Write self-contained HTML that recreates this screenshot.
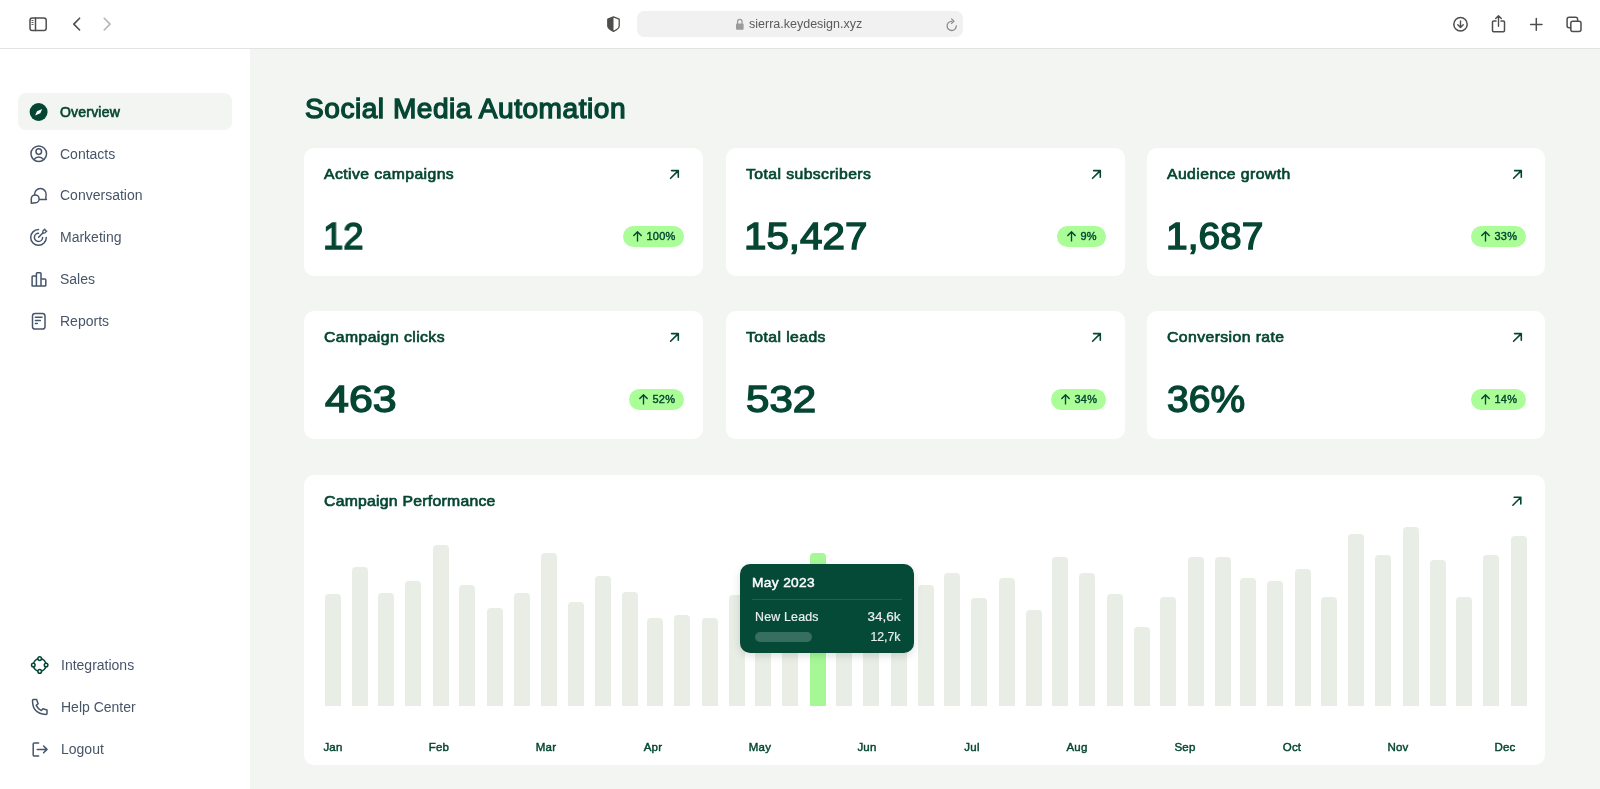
<!DOCTYPE html>
<html><head><meta charset="utf-8"><title>Social Media Automation</title><style>
*{margin:0;padding:0;box-sizing:border-box}
html,body{width:1600px;height:789px;overflow:hidden;background:#f3f5f2;font-family:"Liberation Sans",sans-serif}
.t{position:absolute;line-height:1;white-space:nowrap;will-change:transform}
.abs{position:absolute}
#bar{position:absolute;left:0;top:0;width:1600px;height:49px;background:#fff;border-bottom:1px solid #e3e3e3}
#side{position:absolute;left:0;top:49px;width:250px;height:740px;background:#fff}
.card{position:absolute;background:#fff;border-radius:10px}
.badge{position:absolute;height:21px;border-radius:11px;background:#aafd97;display:flex;align-items:center;padding:0 9px 0 9.5px;color:#054633;font-size:11px;font-weight:400;-webkit-text-stroke:0.4px #054633;letter-spacing:0.2px;line-height:1;will-change:transform}
.badge svg{margin-right:5px;flex:none}
.b{position:absolute;background:#e8ede6;border-radius:4px 4px 0 0;width:16px}
</style></head>
<body>
<div id="bar"></div>
<div id="side"></div>
<div class="abs" style="left:637px;top:11px;width:326px;height:26px;border-radius:7px;background:#f1f1f1"></div>
<div class="t" style="left:749px;top:18.42px;font-size:12.5px;font-weight:400;color:#5b5b5b;">sierra.keydesign.xyz</div>
<div class="abs" style="left:18px;top:93px;width:214px;height:37px;border-radius:8px;background:#f3f5f2"></div>
<div class="t" style="left:60px;top:104.55px;font-size:14px;font-weight:400;color:#054633;letter-spacing:0.2px;-webkit-text-stroke:0.63px #054633;">Overview</div>
<div class="t" style="left:60px;top:146.65px;font-size:14px;font-weight:400;color:#475569;">Contacts</div>
<div class="t" style="left:60px;top:188.45px;font-size:14px;font-weight:400;color:#475569;">Conversation</div>
<div class="t" style="left:60px;top:230.25px;font-size:14px;font-weight:400;color:#475569;">Marketing</div>
<div class="t" style="left:60px;top:272.05px;font-size:14px;font-weight:400;color:#475569;">Sales</div>
<div class="t" style="left:60px;top:313.85px;font-size:14px;font-weight:400;color:#475569;">Reports</div>
<div class="t" style="left:61px;top:658.45px;font-size:14px;font-weight:400;color:#475569;">Integrations</div>
<div class="t" style="left:61px;top:700.35px;font-size:14px;font-weight:400;color:#475569;">Help Center</div>
<div class="t" style="left:61px;top:742.45px;font-size:14px;font-weight:400;color:#475569;">Logout</div>
<div class="t" style="left:305px;top:95.64px;font-size:27px;font-weight:400;color:#054633;-webkit-text-stroke:1.3px #054633;letter-spacing:0.5px;transform:scaleX(1.04);transform-origin:0 0;">Social Media Automation</div>
<div class="card" style="left:304px;top:148px;width:399px;height:128px"></div>
<div class="t" style="left:324px;top:166.30px;font-size:15px;font-weight:400;color:#054633;letter-spacing:0.4px;transform:scaleX(1.05);transform-origin:0 0;-webkit-text-stroke:0.67px #054633;">Active campaigns</div>
<div class="t" style="left:323px;top:218.26px;font-size:37.5px;font-weight:400;color:#054633;transform:scaleX(0.974);transform-origin:0 0;-webkit-text-stroke:1.4px #054633;">12</div>
<div class="badge" style="right:916px;top:226px"><svg width="9" height="11" viewBox="0 0 9 11"><path d="M4.5 10.6V1M0.4 4.9L4.5 0.8L8.6 4.9" fill="none" stroke="#054633" stroke-width="1.35"/></svg>100%</div>
<div class="card" style="left:726px;top:148px;width:399px;height:128px"></div>
<div class="t" style="left:746px;top:166.30px;font-size:15px;font-weight:400;color:#054633;letter-spacing:0.4px;transform:scaleX(1.05);transform-origin:0 0;-webkit-text-stroke:0.67px #054633;">Total subscribers</div>
<div class="t" style="left:744.3px;top:218.26px;font-size:37.5px;font-weight:400;color:#054633;transform:scaleX(1.075);transform-origin:0 0;-webkit-text-stroke:1.4px #054633;">15,427</div>
<div class="badge" style="right:494px;top:226px"><svg width="9" height="11" viewBox="0 0 9 11"><path d="M4.5 10.6V1M0.4 4.9L4.5 0.8L8.6 4.9" fill="none" stroke="#054633" stroke-width="1.35"/></svg>9%</div>
<div class="card" style="left:1147px;top:148px;width:398px;height:128px"></div>
<div class="t" style="left:1167px;top:166.30px;font-size:15px;font-weight:400;color:#054633;letter-spacing:0.4px;transform:scaleX(1.05);transform-origin:0 0;-webkit-text-stroke:0.67px #054633;">Audience growth</div>
<div class="t" style="left:1166.2px;top:218.26px;font-size:37.5px;font-weight:400;color:#054633;transform:scaleX(1.038);transform-origin:0 0;-webkit-text-stroke:1.4px #054633;">1,687</div>
<div class="badge" style="right:74px;top:226px"><svg width="9" height="11" viewBox="0 0 9 11"><path d="M4.5 10.6V1M0.4 4.9L4.5 0.8L8.6 4.9" fill="none" stroke="#054633" stroke-width="1.35"/></svg>33%</div>
<div class="card" style="left:304px;top:311px;width:399px;height:128px"></div>
<div class="t" style="left:324px;top:329.30px;font-size:15px;font-weight:400;color:#054633;letter-spacing:0.4px;transform:scaleX(1.05);transform-origin:0 0;-webkit-text-stroke:0.67px #054633;">Campaign clicks</div>
<div class="t" style="left:325px;top:381.26px;font-size:37.5px;font-weight:400;color:#054633;transform:scaleX(1.145);transform-origin:0 0;-webkit-text-stroke:1.4px #054633;">463</div>
<div class="badge" style="right:916px;top:389px"><svg width="9" height="11" viewBox="0 0 9 11"><path d="M4.5 10.6V1M0.4 4.9L4.5 0.8L8.6 4.9" fill="none" stroke="#054633" stroke-width="1.35"/></svg>52%</div>
<div class="card" style="left:726px;top:311px;width:399px;height:128px"></div>
<div class="t" style="left:746px;top:329.30px;font-size:15px;font-weight:400;color:#054633;letter-spacing:0.4px;transform:scaleX(1.05);transform-origin:0 0;-webkit-text-stroke:0.67px #054633;">Total leads</div>
<div class="t" style="left:746px;top:381.26px;font-size:37.5px;font-weight:400;color:#054633;transform:scaleX(1.121);transform-origin:0 0;-webkit-text-stroke:1.4px #054633;">532</div>
<div class="badge" style="right:494px;top:389px"><svg width="9" height="11" viewBox="0 0 9 11"><path d="M4.5 10.6V1M0.4 4.9L4.5 0.8L8.6 4.9" fill="none" stroke="#054633" stroke-width="1.35"/></svg>34%</div>
<div class="card" style="left:1147px;top:311px;width:398px;height:128px"></div>
<div class="t" style="left:1167px;top:329.30px;font-size:15px;font-weight:400;color:#054633;letter-spacing:0.4px;transform:scaleX(1.05);transform-origin:0 0;-webkit-text-stroke:0.67px #054633;">Conversion rate</div>
<div class="t" style="left:1166.9px;top:381.26px;font-size:37.5px;font-weight:400;color:#054633;transform:scaleX(1.04);transform-origin:0 0;-webkit-text-stroke:1.4px #054633;">36%</div>
<div class="badge" style="right:74px;top:389px"><svg width="9" height="11" viewBox="0 0 9 11"><path d="M4.5 10.6V1M0.4 4.9L4.5 0.8L8.6 4.9" fill="none" stroke="#054633" stroke-width="1.35"/></svg>14%</div>
<div class="card" style="left:304px;top:475px;width:1241px;height:290px"></div>
<div class="t" style="left:324px;top:493.10px;font-size:15px;font-weight:400;color:#054633;letter-spacing:0.25px;transform:scaleX(1.05);transform-origin:0 0;-webkit-text-stroke:0.67px #054633;">Campaign Performance</div>
<div class="b" style="left:325.00px;top:593.5px;height:112.5px"></div>
<div class="b" style="left:352.00px;top:566.9px;height:139.1px"></div>
<div class="b" style="left:378.00px;top:592.7px;height:113.3px"></div>
<div class="b" style="left:405.00px;top:581.3px;height:124.7px"></div>
<div class="b" style="left:433.00px;top:544.6px;height:161.4px"></div>
<div class="b" style="left:459.00px;top:584.9px;height:121.1px"></div>
<div class="b" style="left:487.00px;top:607.9px;height:98.1px"></div>
<div class="b" style="left:514.00px;top:592.7px;height:113.3px"></div>
<div class="b" style="left:541.00px;top:553.4px;height:152.6px"></div>
<div class="b" style="left:568.00px;top:602.3px;height:103.7px"></div>
<div class="b" style="left:595.00px;top:575.7px;height:130.3px"></div>
<div class="b" style="left:622.00px;top:591.7px;height:114.3px"></div>
<div class="b" style="left:647.00px;top:618.0px;height:88.0px"></div>
<div class="b" style="left:674.00px;top:615.0px;height:91.0px"></div>
<div class="b" style="left:702.00px;top:618.0px;height:88.0px"></div>
<div class="b" style="left:729.00px;top:594.7px;height:111.3px"></div>
<div class="b" style="left:755.00px;top:590.0px;height:116.0px"></div>
<div class="b" style="left:782.00px;top:590.0px;height:116.0px"></div>
<div class="b" style="left:810.00px;top:553.4px;height:152.6px;background:#a6f897"></div>
<div class="b" style="left:836.00px;top:590.0px;height:116.0px"></div>
<div class="b" style="left:863.00px;top:590.0px;height:116.0px"></div>
<div class="b" style="left:891.00px;top:590.0px;height:116.0px"></div>
<div class="b" style="left:918.00px;top:585.0px;height:121.0px"></div>
<div class="b" style="left:944.00px;top:572.6px;height:133.4px"></div>
<div class="b" style="left:971.00px;top:598.2px;height:107.8px"></div>
<div class="b" style="left:999.00px;top:578.4px;height:127.6px"></div>
<div class="b" style="left:1026.00px;top:610.3px;height:95.7px"></div>
<div class="b" style="left:1052.00px;top:556.9px;height:149.1px"></div>
<div class="b" style="left:1079.00px;top:572.6px;height:133.4px"></div>
<div class="b" style="left:1107.00px;top:593.6px;height:112.4px"></div>
<div class="b" style="left:1134.00px;top:627.0px;height:79.0px"></div>
<div class="b" style="left:1160.00px;top:596.9px;height:109.1px"></div>
<div class="b" style="left:1188.00px;top:556.9px;height:149.1px"></div>
<div class="b" style="left:1215.00px;top:556.9px;height:149.1px"></div>
<div class="b" style="left:1240.00px;top:577.9px;height:128.1px"></div>
<div class="b" style="left:1267.00px;top:581.4px;height:124.6px"></div>
<div class="b" style="left:1295.00px;top:569.0px;height:137.0px"></div>
<div class="b" style="left:1321.00px;top:596.9px;height:109.1px"></div>
<div class="b" style="left:1348.00px;top:533.6px;height:172.4px"></div>
<div class="b" style="left:1375.00px;top:554.8px;height:151.2px"></div>
<div class="b" style="left:1403.00px;top:527.0px;height:179.0px"></div>
<div class="b" style="left:1430.00px;top:560.2px;height:145.8px"></div>
<div class="b" style="left:1456.00px;top:596.9px;height:109.1px"></div>
<div class="b" style="left:1483.00px;top:554.7px;height:151.3px"></div>
<div class="b" style="left:1511.00px;top:535.8px;height:170.2px"></div>
<div class="t" style="left:303.4px;width:60px;text-align:center;top:741.52px;font-size:11.5px;font-weight:400;-webkit-text-stroke:0.45px #054633;letter-spacing:0.2px;color:#054633">Jan</div>
<div class="t" style="left:409px;width:60px;text-align:center;top:741.52px;font-size:11.5px;font-weight:400;-webkit-text-stroke:0.45px #054633;letter-spacing:0.2px;color:#054633">Feb</div>
<div class="t" style="left:515.9px;width:60px;text-align:center;top:741.52px;font-size:11.5px;font-weight:400;-webkit-text-stroke:0.45px #054633;letter-spacing:0.2px;color:#054633">Mar</div>
<div class="t" style="left:622.9px;width:60px;text-align:center;top:741.52px;font-size:11.5px;font-weight:400;-webkit-text-stroke:0.45px #054633;letter-spacing:0.2px;color:#054633">Apr</div>
<div class="t" style="left:729.75px;width:60px;text-align:center;top:741.52px;font-size:11.5px;font-weight:400;-webkit-text-stroke:0.45px #054633;letter-spacing:0.2px;color:#054633">May</div>
<div class="t" style="left:837px;width:60px;text-align:center;top:741.52px;font-size:11.5px;font-weight:400;-webkit-text-stroke:0.45px #054633;letter-spacing:0.2px;color:#054633">Jun</div>
<div class="t" style="left:941.6px;width:60px;text-align:center;top:741.52px;font-size:11.5px;font-weight:400;-webkit-text-stroke:0.45px #054633;letter-spacing:0.2px;color:#054633">Jul</div>
<div class="t" style="left:1046.6px;width:60px;text-align:center;top:741.52px;font-size:11.5px;font-weight:400;-webkit-text-stroke:0.45px #054633;letter-spacing:0.2px;color:#054633">Aug</div>
<div class="t" style="left:1154.9px;width:60px;text-align:center;top:741.52px;font-size:11.5px;font-weight:400;-webkit-text-stroke:0.45px #054633;letter-spacing:0.2px;color:#054633">Sep</div>
<div class="t" style="left:1261.5px;width:60px;text-align:center;top:741.52px;font-size:11.5px;font-weight:400;-webkit-text-stroke:0.45px #054633;letter-spacing:0.2px;color:#054633">Oct</div>
<div class="t" style="left:1367.9px;width:60px;text-align:center;top:741.52px;font-size:11.5px;font-weight:400;-webkit-text-stroke:0.45px #054633;letter-spacing:0.2px;color:#054633">Nov</div>
<div class="t" style="left:1475.4px;width:60px;text-align:center;top:741.52px;font-size:11.5px;font-weight:400;-webkit-text-stroke:0.45px #054633;letter-spacing:0.2px;color:#054633">Dec</div>
<div class="abs" style="left:740px;top:564px;width:174px;height:89px;border-radius:10px;background:#044a37;box-shadow:0 3px 9px rgba(0,0,0,0.13)"></div>
<div class="t" style="left:752px;top:576.00px;font-size:13px;font-weight:400;color:#ffffff;letter-spacing:0.3px;transform:scaleX(1.06);transform-origin:0 0;-webkit-text-stroke:0.45px #ffffff;">May 2023</div>
<div class="abs" style="left:752px;top:599px;width:150px;height:1px;background:rgba(255,255,255,0.12)"></div>
<div class="t" style="left:755px;top:611.14px;font-size:12px;font-weight:400;color:#e9efec;letter-spacing:0.2px;-webkit-text-stroke:0.2px #e9efec;transform:scaleX(1.03);transform-origin:0 0;">New Leads</div>
<div class="t" style="right:699.5px;top:611.14px;font-size:12px;font-weight:400;color:#e9efec;-webkit-text-stroke:0.2px #e9efec;transform:scaleX(1.12);transform-origin:100% 0;">34,6k</div>
<div class="abs" style="left:755px;top:631.5px;width:57px;height:10px;border-radius:5px;background:rgba(255,255,255,0.2)"></div>
<div class="t" style="right:699.5px;top:630.84px;font-size:12px;font-weight:400;color:#e9efec;-webkit-text-stroke:0.2px #e9efec;transform:scaleX(1.02);transform-origin:100% 0;">12,7k</div>
<svg class="abs" style="left:0;top:0;pointer-events:none" width="1600" height="789" viewBox="0 0 1600 789"><rect x="30" y="18" width="16.2" height="12.6" rx="2.3" fill="none" stroke="#4d4f4c" stroke-width="1.5"/><path d="M35.5 18V30.5" fill="none" stroke="#4d4f4c" stroke-width="1.5" stroke-linecap="round" stroke-linejoin="round" /><path d="M31.9 20.5H33.1M31.9 22.5H33.1M31.9 24.5H33.1" fill="none" stroke="#4d4f4c" stroke-width="0.9" stroke-linecap="round" stroke-linejoin="round" /><path d="M79.6 18.2L73.8 24.1L79.6 30" fill="none" stroke="#4d4f4c" stroke-width="1.6" stroke-linecap="round" stroke-linejoin="round" /><path d="M104.2 18.2L110 24.1L104.2 30" fill="none" stroke="#b4b6b4" stroke-width="1.6" stroke-linecap="round" stroke-linejoin="round" /><path d="M613.5 16.9L607.8 19.2V26Q607.8 28.8 613.5 31.4Z" fill="#4d4f4c"/><path d="M613.5 16.9L619.2 19.2V26Q619.2 28.8 613.5 31.4Q607.8 28.8 607.8 26V19.2Z" fill="none" stroke="#4d4f4c" stroke-width="1.3" stroke-linecap="round" stroke-linejoin="round" /><rect x="736" y="23.4" width="7.6" height="6.3" rx="1" fill="#9b9b9b"/><path d="M737.6 23.6V21.5A2.2 2.2 0 0 1 742 21.5V23.6" fill="none" stroke="#9b9b9b" stroke-width="1.3" stroke-linecap="round" stroke-linejoin="round" /><path d="M951.7 21.3A4.6 4.6 0 1 0 956.3 25.8" fill="none" stroke="#8c8c8c" stroke-width="1.3" stroke-linecap="round" stroke-linejoin="round" /><path d="M951.6 18.9L953.9 21.2L951.6 23.4" fill="none" stroke="#8c8c8c" stroke-width="1.3" stroke-linecap="round" stroke-linejoin="round" /><circle cx="1460.5" cy="24.2" r="6.7" fill="none" stroke="#4d4f4c" stroke-width="1.5"/><path d="M1460.5 20.9V27.4M1457.8 24.8L1460.5 27.5L1463.2 24.8" fill="none" stroke="#4d4f4c" stroke-width="1.4" stroke-linecap="round" stroke-linejoin="round" /><path d="M1496 20.9H1493.7Q1492.5 20.9 1492.5 22.1V30.6Q1492.5 31.8 1493.7 31.8H1503.3Q1504.5 31.8 1504.5 30.6V22.1Q1504.5 20.9 1503.3 20.9H1501" fill="none" stroke="#4d4f4c" stroke-width="1.5" stroke-linecap="round" stroke-linejoin="round" /><path d="M1498.5 15.9V26.3M1495.7 18.6L1498.5 15.8L1501.3 18.6" fill="none" stroke="#4d4f4c" stroke-width="1.4" stroke-linecap="round" stroke-linejoin="round" /><path d="M1530.6 24.4H1542M1536.3 18.5V30.3" fill="none" stroke="#4d4f4c" stroke-width="1.5" stroke-linecap="round" stroke-linejoin="round" /><rect x="1570.8" y="21.2" width="10.2" height="10.4" rx="2" fill="none" stroke="#4d4f4c" stroke-width="1.5"/><path d="M1570.6 27.7H1569.1Q1567.1 27.7 1567.1 25.7V19.3Q1567.1 17.3 1569.1 17.3H1575.6Q1577.6 17.3 1577.6 19.3V21" fill="none" stroke="#4d4f4c" stroke-width="1.5" stroke-linecap="round" stroke-linejoin="round" /><circle cx="38.6" cy="112" r="9" fill="#054633"/><path d="M42.2 109.1L40.3 113.3L35.1 115.4L37 111.2Z" fill="#fff"/><circle cx="38.75" cy="153.75" r="7.8" fill="none" stroke="#475569" stroke-width="1.5"/><circle cx="38.75" cy="151.6" r="2.8" fill="none" stroke="#475569" stroke-width="1.5"/><path d="M33.9 159.5C35.5 157.7 37 157 38.75 157C40.5 157 42 157.7 43.6 159.5" fill="none" stroke="#475569" stroke-width="1.5" stroke-linecap="round" stroke-linejoin="round" /><path d="M34.6 195.1A5.8 5.8 0 1 1 46.1 195.2Q45.7 197.3 45.9 198.2L46.4 199.6H39.7" fill="none" stroke="#475569" stroke-width="1.5" stroke-linecap="round" stroke-linejoin="round" /><path d="M31.3 203.2V198.9A3.9 3.9 0 1 1 35.2 202.8Q33.6 203 31.3 203.2Z" fill="none" stroke="#475569" stroke-width="1.5" stroke-linecap="round" stroke-linejoin="round" /><path d="M38.5 229.6A7.8 7.8 0 1 0 46.3 237.4" fill="none" stroke="#475569" stroke-width="1.5" stroke-linecap="round" stroke-linejoin="round" /><path d="M38.5 233.3A4.1 4.1 0 1 0 42.6 237.4" fill="none" stroke="#475569" stroke-width="1.5" stroke-linecap="round" stroke-linejoin="round" /><path d="M38.6 237.3L42.6 233.3" fill="none" stroke="#475569" stroke-width="1.5" stroke-linecap="round" stroke-linejoin="round" /><path d="M42.6 233.3L43 230.8L44.9 229.1L45.3 230.7L46.8 231.1L45 232.9Z" fill="none" stroke="#475569" stroke-width="1.3" stroke-linecap="round" stroke-linejoin="round" /><path d="M32.1 286V276.8Q32.1 276 32.9 276H36.4V273.5Q36.4 272.7 37.2 272.7H40.2Q41 272.7 41 273.5V279.1H45Q45.8 279.1 45.8 279.9V285.2Q45.8 286 45 286ZM36.4 276V286M41 279.1V286" fill="none" stroke="#475569" stroke-width="1.5" stroke-linecap="round" stroke-linejoin="round" /><rect x="32.5" y="313.5" width="12.5" height="15.6" rx="2.6" fill="none" stroke="#475569" stroke-width="1.5"/><path d="M35.4 317.3H42M35.4 320.5H40.3M35.4 323.6H37.3" fill="none" stroke="#475569" stroke-width="1.5" stroke-linecap="round" stroke-linejoin="round" /><circle cx="39.7" cy="665" r="6.4" fill="none" stroke="#054633" stroke-width="1.5"/><circle cx="39.7" cy="658.6" r="1.8" fill="#fff" stroke="#054633" stroke-width="1.5"/><circle cx="33.3" cy="665" r="1.8" fill="#fff" stroke="#054633" stroke-width="1.5"/><circle cx="46.1" cy="665" r="1.8" fill="#fff" stroke="#054633" stroke-width="1.5"/><circle cx="39.7" cy="671.4" r="1.8" fill="#fff" stroke="#054633" stroke-width="1.5"/><path d="M33.4 699.4H36.6L38.1 703.7L36.2 705.4Q37.9 708.9 41.3 710.6L43 708.8L47 710V713.4Q47 714.4 46 714.4Q39 714.2 35.5 710.3Q32.6 707 32.5 700.4Q32.5 699.4 33.4 699.4Z" fill="none" stroke="#475569" stroke-width="1.5" stroke-linecap="round" stroke-linejoin="round" /><path d="M38.6 742.9H34.3Q33.2 742.9 33.2 744V754.9Q33.2 756 34.3 756H38.6" fill="none" stroke="#475569" stroke-width="1.5" stroke-linecap="round" stroke-linejoin="round" /><path d="M37.3 749.4H47M43.6 746L47 749.4L43.6 752.8" fill="none" stroke="#475569" stroke-width="1.5" stroke-linecap="round" stroke-linejoin="round" /><g transform="translate(0,0)"><path d="M670.6 178.3L678.3 170.6M671.6 170.6H678.3V177.3" fill="none" stroke="#054633" stroke-width="1.6" stroke-linecap="round" stroke-linejoin="round" /></g><g transform="translate(422,0)"><path d="M670.6 178.3L678.3 170.6M671.6 170.6H678.3V177.3" fill="none" stroke="#054633" stroke-width="1.6" stroke-linecap="round" stroke-linejoin="round" /></g><g transform="translate(843,0)"><path d="M670.6 178.3L678.3 170.6M671.6 170.6H678.3V177.3" fill="none" stroke="#054633" stroke-width="1.6" stroke-linecap="round" stroke-linejoin="round" /></g><g transform="translate(0,163)"><path d="M670.6 178.3L678.3 170.6M671.6 170.6H678.3V177.3" fill="none" stroke="#054633" stroke-width="1.6" stroke-linecap="round" stroke-linejoin="round" /></g><g transform="translate(422,163)"><path d="M670.6 178.3L678.3 170.6M671.6 170.6H678.3V177.3" fill="none" stroke="#054633" stroke-width="1.6" stroke-linecap="round" stroke-linejoin="round" /></g><g transform="translate(843,163)"><path d="M670.6 178.3L678.3 170.6M671.6 170.6H678.3V177.3" fill="none" stroke="#054633" stroke-width="1.6" stroke-linecap="round" stroke-linejoin="round" /></g><path d="M1512.9 505.2L1520.8 497.3M1514.2 497.3H1520.8V503.9" fill="none" stroke="#054633" stroke-width="1.6" stroke-linecap="round" stroke-linejoin="round" /></svg>
</body></html>
